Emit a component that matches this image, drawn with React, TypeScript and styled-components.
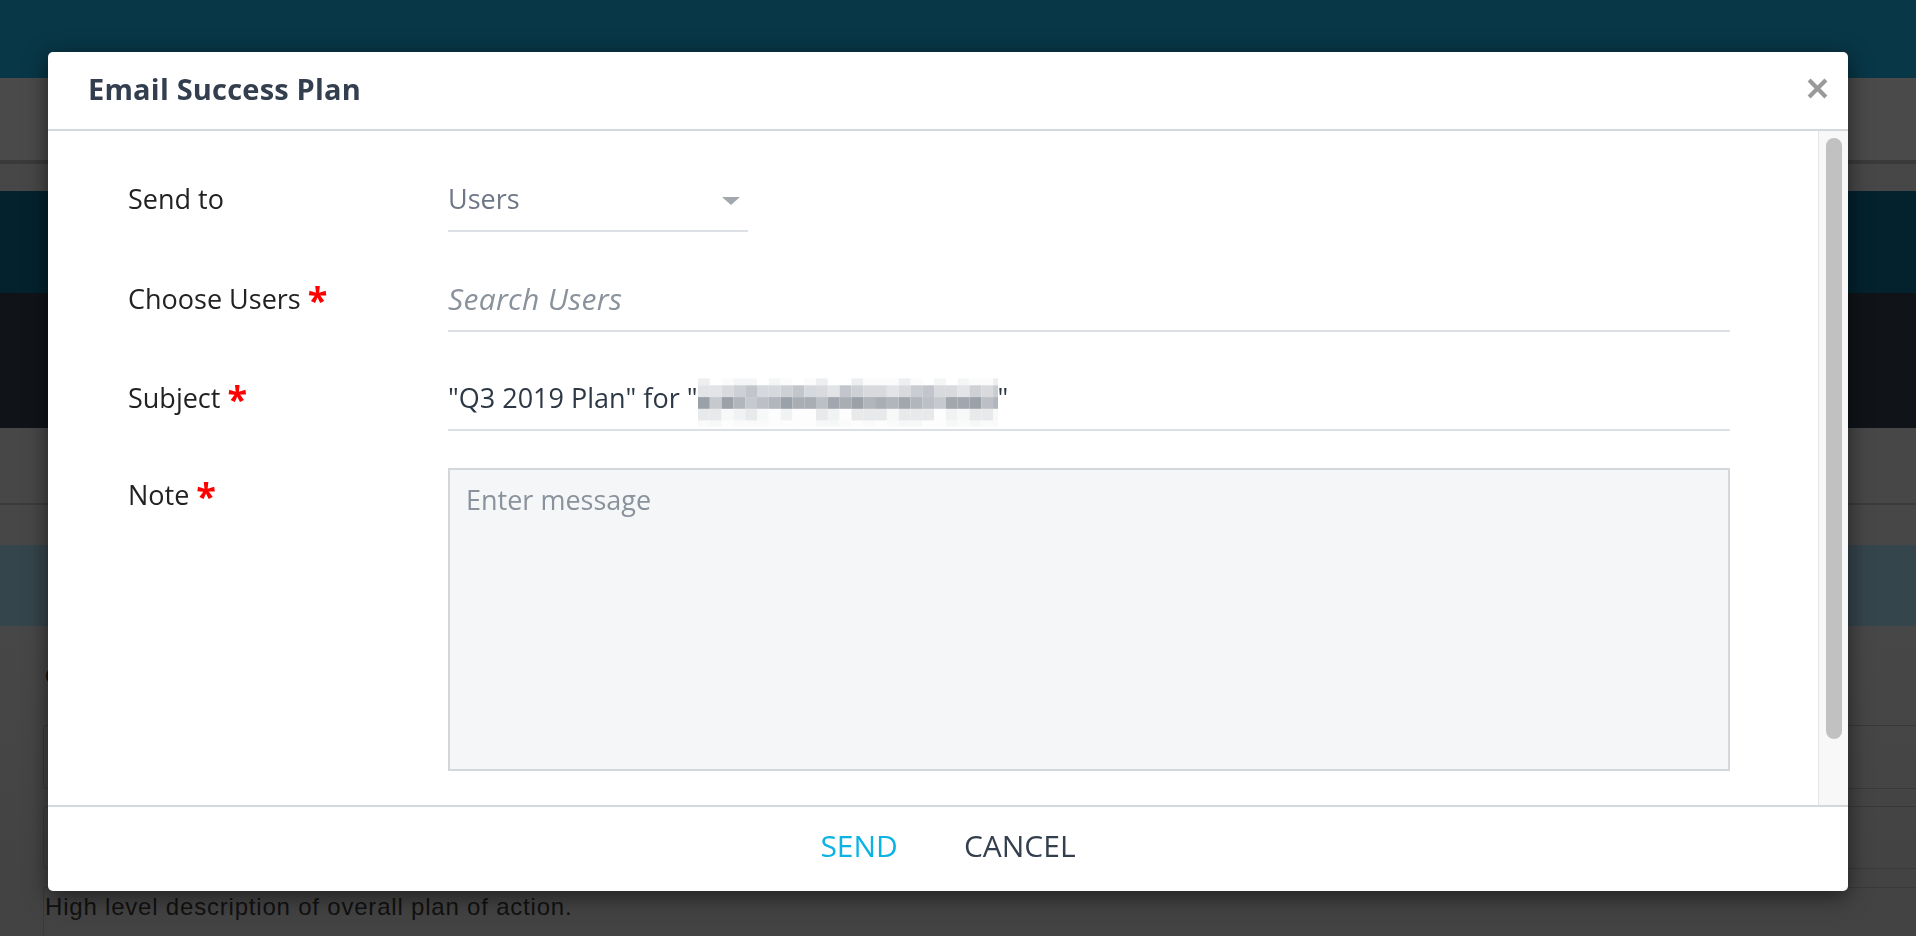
import React from 'react'
import styled, { createGlobalStyle } from 'styled-components'

const GlobalStyle = createGlobalStyle`
  html, body {
    margin: 0;
    padding: 0;
    height: 100%;
    overflow: hidden;
    background: #474747;
  }
  * { box-sizing: border-box; }
`

// ---- dimmed page behind the dialog ----
const Page = styled.div`
  height: 936px;
  overflow: hidden;
  display: flex;
  flex-direction: column;
  background: #474747;
`

const Band = styled.div<{ $h: number; $bg: string; $line?: string; $lineW?: number }>`
  flex-shrink: 0;
  height: ${p => p.$h}px;
  background: ${p => p.$bg};
  ${p => (p.$line ? `border-bottom: ${p.$lineW ?? 2}px solid ${p.$line};` : '')}
`

const Content = styled.div`
  flex: 1;
  padding: 38px 0 0 43px;
  background: linear-gradient(#474747, #424242);
  font-family: 'Liberation Sans', Arial, sans-serif;
  color: #111;
`

const SectionLabel = styled.div`
  font-size: 20px;
  line-height: 24px;
  margin: 0 0 37px 2px;
`

const GhostBox = styled.div<{ $h: number; $mb?: number }>`
  height: ${p => p.$h}px;
  margin: 0 -10px ${p => p.$mb ?? 0}px 0;
  border: 1px solid #393939;
  border-radius: 4px;
`

const GhostText = styled(GhostBox)`
  padding: 5px 0 0 1px;
  font-size: 24px;
  line-height: 28px;
  letter-spacing: 0.8px;
  border-bottom: none;
`

// ---- dialog ----
const Modal = styled.div`
  position: fixed;
  top: 52px;
  left: 48px;
  width: 1800px;
  height: 839px;
  background: #fff;
  border-radius: 5px;
  box-shadow: 0 5px 22px rgba(0, 0, 0, 0.55);
  display: flex;
  flex-direction: column;
  overflow: hidden;
  font-family: 'Open Sans', sans-serif;
`

const Header = styled.div`
  flex-shrink: 0;
  height: 79px;
  display: flex;
  align-items: center;
  justify-content: space-between;
  padding: 0 20px 4px 40px;
  border-bottom: 2px solid #d4d8dc;
`

const Title = styled.h2`
  margin: 0;
  font-size: 29px;
  font-weight: 700;
  letter-spacing: 0.2px;
  color: #333f4e;
`

const CloseButton = styled.button`
  display: flex;
  padding: 0;
  border: none;
  background: none;
  cursor: pointer;
`

const Body = styled.div`
  flex: 1;
  display: flex;
  overflow: hidden;
`

const Form = styled.div`
  flex: 1;
  padding: 48px 88px 0 80px;
`

const ScrollTrack = styled.div`
  width: 30px;
  flex-shrink: 0;
  padding: 7px 6px 0 7px;
  background: #f8f8f8;
  border-left: 1px solid #e6e6e6;
`

const ScrollThumb = styled.div`
  height: 601px;
  border-radius: 8px;
  background: #c1c1c1;
`

const Row = styled.div<{ $mb?: number }>`
  display: flex;
  align-items: flex-start;
  margin-bottom: ${p => p.$mb ?? 0}px;
`

const Label = styled.div<{ $pt?: number }>`
  width: 320px;
  flex-shrink: 0;
  padding-top: ${p => p.$pt ?? 0}px;
  font-size: 27px;
  line-height: 40px;
  color: #222;
`

const Required = styled.span`
  display: inline-block;
  margin-left: 7px;
  font-size: 36px;
  font-weight: 700;
  line-height: 0;
  color: #ff0000;
  vertical-align: -4px;
`

const Select = styled.div`
  width: 300px;
  height: 53px;
  display: flex;
  align-items: center;
  justify-content: space-between;
  padding: 0 8px 11px 0;
  border-bottom: 2px solid #dcdfe3;
  font-size: 27px;
  line-height: 40px;
  color: #6e7787;
`

const Caret = styled.span`
  width: 0;
  height: 0;
  margin-top: 3px;
  border-left: 9px solid transparent;
  border-right: 9px solid transparent;
  border-top: 8px solid #a3a7ae;
`

const TextInput = styled.input`
  flex: 1;
  height: 53px;
  padding: 0 0 11px;
  border: none;
  border-bottom: 2px solid #dcdfe3;
  outline: none;
  font-family: inherit;
  font-size: 27px;
  line-height: 40px;
  color: #2d3846;
  background: transparent;

  &::placeholder {
    color: #8a929c;
    font-style: italic;
    font-size: 30px;
    letter-spacing: 0.3px;
  }
`

const StaticField = styled.div`
  flex: 1;
  height: 53px;
  padding: 0 0 11px;
  border-bottom: 2px solid #dcdfe3;
  font-size: 27px;
  line-height: 40px;
  color: #2d3846;
  white-space: nowrap;
`

const Mosaic = styled.svg`
  display: inline-block;
  vertical-align: -19px;
`

const MessageBox = styled.textarea`
  flex: 1;
  height: 303px;
  padding: 10px 16px;
  border: 2px solid #d3d6da;
  background: #f5f6f8;
  resize: none;
  outline: none;
  font-family: inherit;
  font-size: 27px;
  line-height: 40px;
  color: #2d3846;

  &::placeholder {
    color: #8a929c;
  }
`

const Footer = styled.div`
  flex-shrink: 0;
  height: 86px;
  display: flex;
  align-items: center;
  justify-content: center;
  gap: 66px;
  padding-bottom: 8px;
  border-top: 2px solid #d4d8dc;
`

const FooterButton = styled.button<{ $primary?: boolean }>`
  padding: 0;
  border: none;
  background: none;
  cursor: pointer;
  font-family: inherit;
  font-size: 30px;
  color: ${p => (p.$primary ? '#0bb3e5' : '#333f4e')};
`

// pixelated (redacted) account name
let seed = 11
const rnd = () => {
  seed = (seed * 9301 + 49297) % 233280
  return seed / 233280
}
const mosaicRows = [
  { y: 0, h: 7, shades: ['#f4f5f6', '#fbfbfb', '#eceef0', '#ffffff'] },
  { y: 7, h: 12, shades: ['#d5d8dc', '#c9ccd1', '#cdd0d4', '#e2e4e7', '#d8dadd', '#c2c6cc'] },
  { y: 19, h: 12, shades: ['#a2a7af', '#9ba1a9', '#b1b5bc', '#c6c9ce', '#a9aeb5', '#bcc0c6'] },
  { y: 31, h: 12, shades: ['#f1f2f3', '#f7f8f8', '#e8e9eb', '#fdfdfd'] },
  { y: 43, h: 6, shades: ['#fafafa', '#f6f7f7', '#fdfdfd'] },
]
const mosaicCells = mosaicRows.flatMap(r =>
  Array.from({ length: 26 }, (_, i) => ({
    x: i * 12,
    y: r.y,
    h: r.h,
    fill: r.shades[Math.floor(rnd() * r.shades.length)],
  })),
)

function Redacted() {
  return (
    <Mosaic width="300" height="49" viewBox="0 0 305 49">
      {mosaicCells.map((c, i) => (
        <rect key={i} x={c.x} y={c.y} width="12" height={c.h} fill={c.fill} />
      ))}
    </Mosaic>
  )
}

export default function App() {
  return (
    <>
      <GlobalStyle />
      <Page>
        <Band $h={78} $bg="#083747" />
        <Band $h={86} $bg="#4a4a4a" $line="#3a3a3a" $lineW={4} />
        <Band $h={27} $bg="#474747" />
        <Band $h={102} $bg="#03222e" />
        <Band $h={135} $bg="#101418" />
        <Band $h={77} $bg="#474747" $line="#3b3b3b" />
        <Band $h={40} $bg="#474747" />
        <Band $h={81} $bg="#35454c" />
        <Content>
          <SectionLabel>Overview</SectionLabel>
          <GhostBox $h={64} $mb={17} />
          <GhostBox $h={63} $mb={18} />
          <GhostText $h={60}>High level description of overall plan of action.</GhostText>
        </Content>
      </Page>

      <Modal>
        <Header>
          <Title>Email Success Plan</Title>
          <CloseButton aria-label="Close">
            <svg width="21" height="21" viewBox="0 0 20 20">
              <path d="M2 2 L18 18 M18 2 L2 18" stroke="#9a9a9a" strokeWidth="4" />
            </svg>
          </CloseButton>
        </Header>

        <Body>
          <Form>
            <Row $mb={47}>
              <Label>Send to</Label>
              <Select>
                Users
                <Caret />
              </Select>
            </Row>
            <Row $mb={46}>
              <Label>
                Choose Users<Required>*</Required>
              </Label>
              <TextInput placeholder="Search Users" />
            </Row>
            <Row $mb={37}>
              <Label>
                Subject<Required>*</Required>
              </Label>
              <StaticField>
                "Q3 2019 Plan" for "<Redacted />"
              </StaticField>
            </Row>
            <Row>
              <Label $pt={7}>
                Note<Required>*</Required>
              </Label>
              <MessageBox placeholder="Enter message" />
            </Row>
          </Form>
          <ScrollTrack>
            <ScrollThumb />
          </ScrollTrack>
        </Body>

        <Footer>
          <FooterButton $primary>SEND</FooterButton>
          <FooterButton>CANCEL</FooterButton>
        </Footer>
      </Modal>
    </>
  )
}
